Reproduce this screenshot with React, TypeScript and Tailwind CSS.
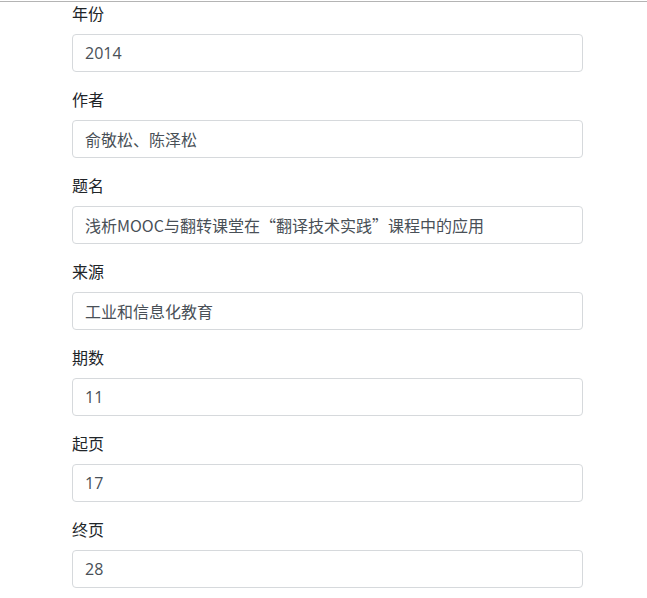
import React from 'react';

type Field = {
  label: string;
  value: string;
  cjk?: boolean;
};

const FIELDS: Field[] = [
  { label: '年份', value: '2014' },
  { label: '作者', value: '俞敬松、陈泽松' },
  // full-width quotes need the CJK font first
  { label: '题名', value: '浅析MOOC与翻转课堂在“翻译技术实践”课程中的应用', cjk: true },
  { label: '来源', value: '工业和信息化教育' },
  { label: '期数', value: '11' },
  { label: '起页', value: '17' },
  { label: '终页', value: '28' },
];

export default function App() {
  return (
    <div
      className="min-h-screen bg-white border-t border-[#b4b4b4] mt-px"
      style={{ fontFamily: '"Open Sans", "Noto Sans CJK SC", sans-serif' }}
    >
      <form className="pl-[72px] pr-[64px]">
        {FIELDS.map((field) => (
          <div key={field.label} className="mb-4">
            <label className="block mb-2 text-base leading-6 text-[#212529]">
              {field.label}
            </label>
            <input
              type="text"
              readOnly
              value={field.value}
              className={
                field.cjk
                  ? 'block w-full h-[38px] px-3 text-base leading-6 text-[#495057] bg-white border border-[#d6d9dc] rounded outline-none font-["Noto_Sans_CJK_SC",sans-serif]'
                  : 'block w-full h-[38px] px-3 text-base leading-6 text-[#495057] bg-white border border-[#d6d9dc] rounded outline-none'
              }
            />
          </div>
        ))}
      </form>
    </div>
  );
}
